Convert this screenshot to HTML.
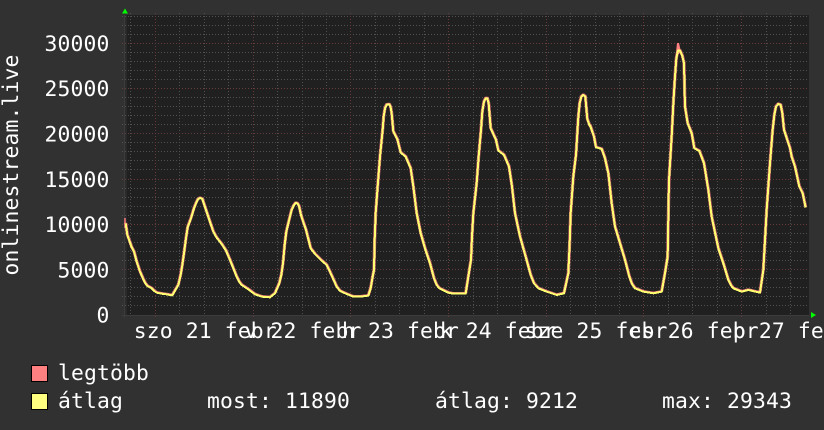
<!DOCTYPE html>
<html><head><meta charset="utf-8"><style>
html,body{margin:0;padding:0;background:#313131;width:824px;height:430px;overflow:hidden}
svg{display:block}
text{font-family:"DejaVu Sans Mono","Liberation Mono",monospace;font-size:21.33px;letter-spacing:.16px;fill:#fff}
</style></head><body>
<svg width="824" height="430" viewBox="0 0 824 430" xmlns="http://www.w3.org/2000/svg">
<rect width="824" height="430" fill="#313131"/>
<rect x="125" y="15" width="684" height="300" fill="#202020"/>
<rect x="124" y="15" width="3" height="300" fill="#2a2a2a"/>
<g shape-rendering="crispEdges" stroke-width="1" fill="none">
<path stroke="#505050" stroke-dasharray="1 2" d="M122 16.5H809M122 25.5H809M122 34.5H809M122 52.5H809M122 61.5H809M122 70.5H809M122 79.5H809M122 97.5H809M122 106.5H809M122 115.5H809M122 124.5H809M122 142.5H809M122 151.5H809M122 160.5H809M122 169.5H809M122 188.5H809M122 197.5H809M122 206.5H809M122 215.5H809M122 233.5H809M122 242.5H809M122 251.5H809M122 260.5H809M122 278.5H809M122 287.5H809M122 296.5H809M122 305.5H809"/>
<path stroke="#505050" stroke-dasharray="1 2" d="M130.5 13V315M179.5 13V315M204.5 13V315M228.5 13V315M277.5 13V315M302.5 13V315M326.5 13V315M375.5 13V315M399.5 13V315M424.5 13V315M473.5 13V315M497.5 13V315M521.5 13V315M570.5 13V315M595.5 13V315M619.5 13V315M668.5 13V315M692.5 13V315M717.5 13V315M766.5 13V315M790.5 13V315"/>
<path stroke="#663c3c" stroke-dasharray="1 2" d="M122 43.5H809M122 88.5H809M122 133.5H809M122 179.5H809M122 224.5H809M122 269.5H809"/>
<path stroke="#663c3c" stroke-dasharray="1 2" d="M155.5 13V318M253.5 13V318M350.5 13V318M448.5 13V318M546.5 13V318M643.5 13V318M741.5 13V318"/>
<path stroke="#3c3c3c" d="M122 315.5H809M124.5 15V318"/>
</g>
<defs>
<g id="ln" fill="none" stroke-linejoin="round" stroke-linecap="butt">
<polyline transform="translate(120,140) scale(.33333)" stroke-width="6" points="17,250 22,285 35,322 42,335 50,365 60,395 70,418 76,430 82,438 95,445 103,453 110,458 125,461 140,463 150,465 157,466 165,452 175,435 182,405 187,375 192,340 198,295 203,262 213,235 222,205 228,190 234,178 240,174 247,177 253,195 268,240 280,275 290,293 305,312 318,332 330,360 350,410 358,426 365,435 385,448 405,463 425,470 450,472 465,460 478,430 484,405 489,370 494,315 499,275 505,250 515,210 521,197 527,189 532,190 537,198 543,225 547,238 558,270 572,325 585,342 605,362 620,375 632,400 650,440 660,453 680,462 700,470 720,470"/>
<polyline transform="translate(360,80) scale(.33333)" stroke-width="6" points="0,650 25,647 32,625 38,590 42,570 44,480 47,400 53,320 60,230 68,150 71,110 75,85 80,74 88,73 92,82 95,100 100,155 112,178 122,218 137,230 152,265 160,320 170,400 182,460 195,505 210,550 222,595 230,615 238,625 265,638 280,641 317,641 325,590 333,540 336,470 340,400 350,310 356,230 363,150 367,95 372,65 377,55 382,55 386,70 392,145 408,180 415,212 432,225 447,260 456,320 465,400 480,470 497,530 512,585 522,610 535,625 560,635 590,645 612,640 625,580 629,490 632,400 640,290 648,225 655,110 659,70 664,50 670,45 676,50 682,118 690,140"/>
<polyline transform="translate(590,30) scale(.33333)" stroke-width="6" points="0,285 12,320 18,352 35,357 45,385 55,430 65,520 75,590 90,640 105,690 118,740 126,762 135,775 160,785 190,790 215,785 225,730 233,680 235,560 237,450 245,320 250,220 255,140 259,85 264,62 270,62 277,78 282,100 285,230 293,280 305,310 313,355 328,363 342,400 355,480 365,560 385,655 400,700 415,750 423,766 430,775 455,785 475,780 510,788 520,720 530,540 540,400 548,300 553,255 558,230 565,222 572,225 577,250 582,300 600,355 605,380 615,410 628,470 638,490 647,533"/>
</g>
</defs>
<use href="#ln" stroke="#ff8080" opacity=".75" transform="translate(-.6,-.6)"/>
<use href="#ln" stroke="#ff8080" opacity=".75" transform="translate(.6,-.6)"/>
<path d="M675.5 57L677 43H679L681 52Z" fill="#ff8080"/>
<path d="M125 218V228" stroke="#ff8080" stroke-width="1.5"/>
<use href="#ln" stroke="#ffff70" shape-rendering="crispEdges"/>
<path d="M122 13.5L125 8.5L128 13.5Z" fill="#0f0"/>
<path d="M811 312L816 315L811 318Z" fill="#0f0"/>
<text x="44.5" y="51">30000</text>
<text x="44.5" y="96">25000</text>
<text x="44.5" y="141.5">20000</text>
<text x="44.5" y="187">15000</text>
<text x="44.5" y="232">10000</text>
<text x="57.5" y="277.5">5000</text>
<text x="96.5" y="322.5">0</text>
<text transform="translate(18,275.5) rotate(-90)">onlinestream.live</text>
<text x="133.7" y="338">szo 21 febr</text>
<text x="244.5" y="338">v 22 febr</text>
<text x="342" y="338">h 23 febr</text>
<text x="439.8" y="338">k 24 febr</text>
<text x="524.5" y="338">sze 25 febr</text>
<text x="628.7" y="338">cs 26 febr</text>
<text x="732.9" y="338">p 27 febr</text>
<rect x="31.5" y="365.5" width="16" height="16" fill="#ff8080" stroke="#000"/>
<rect x="31.5" y="393.5" width="16" height="16" fill="#ffff80" stroke="#000"/>
<text x="58" y="380">legtöbb</text>
<text x="58" y="408">átlag</text>
<text x="207" y="408">most: 11890</text>
<text x="435" y="408">átlag: 9212</text>
<text x="662" y="408">max: 29343</text>
</svg>
</body></html>
